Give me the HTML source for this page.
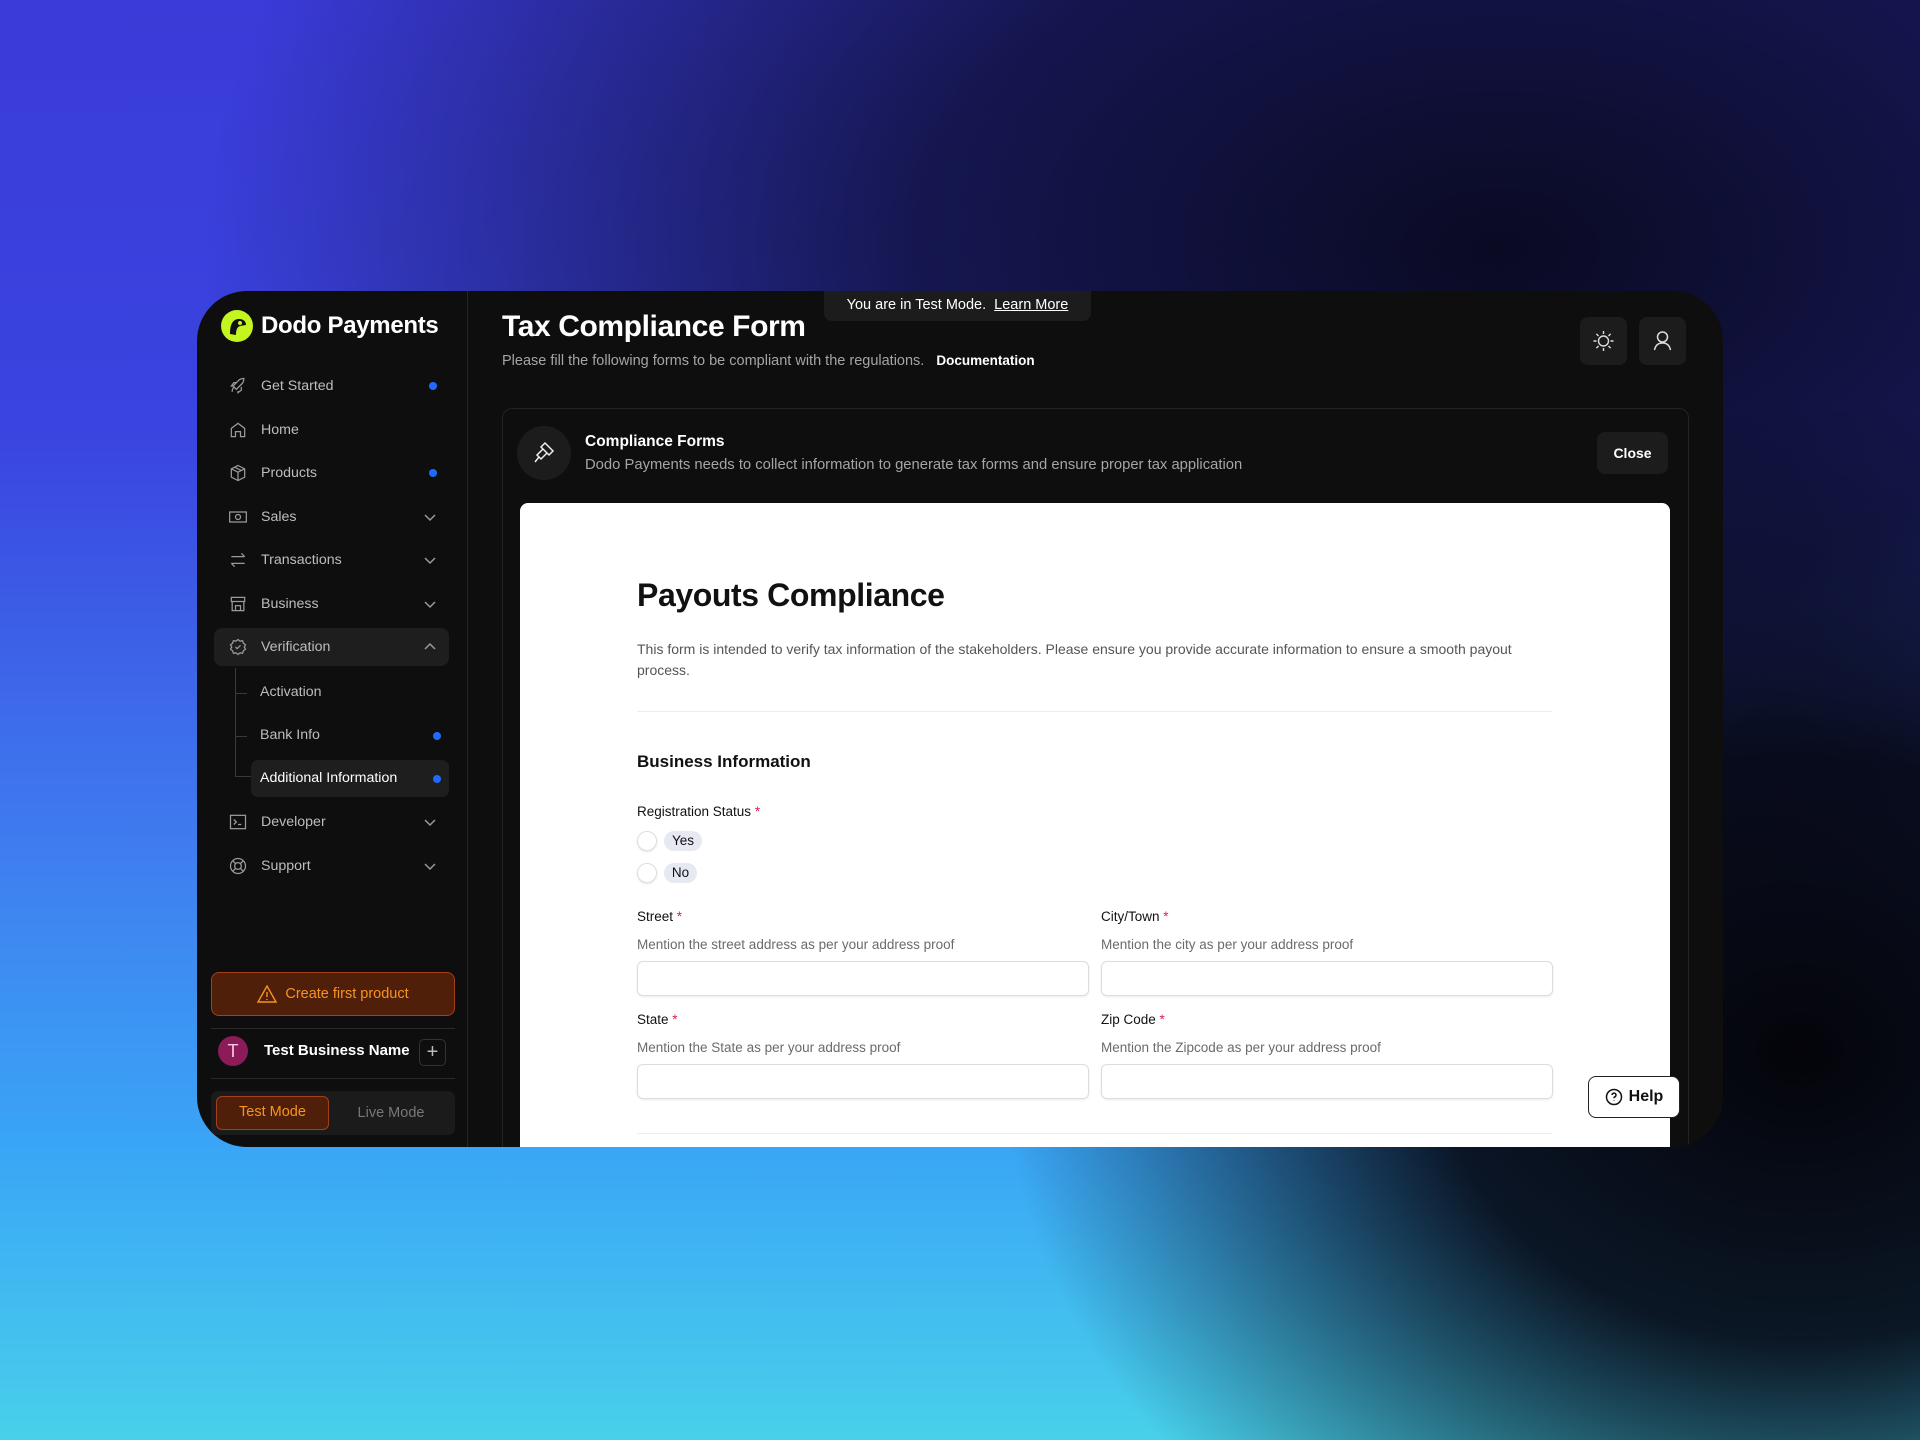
<!DOCTYPE html>
<html><head><meta charset="utf-8"><style>
*{box-sizing:border-box;margin:0;padding:0}
html,body{width:1920px;height:1440px;overflow:hidden}
body{font-family:"Liberation Sans",sans-serif;position:relative;
background:
radial-gradient(ellipse 800px 650px at 1800px 1050px,rgba(4,4,10,1) 0%,rgba(5,5,15,0.9) 45%,rgba(5,5,15,0) 100%),
radial-gradient(ellipse 1300px 800px at 1500px 250px,rgba(10,10,35,1) 0%,rgba(12,12,45,0.8) 45%,rgba(10,10,40,0) 100%),
linear-gradient(180deg,#3a3bd8 0%,#3a44e0 30%,#3f7ff0 60%,#3aa6f6 80%,#48d0ea 100%);}
.win{position:absolute;left:197px;top:291px;width:1526px;height:856px;background:#0e0e0e;border-radius:50px;overflow:hidden}
.side{position:absolute;left:0;top:0;width:271px;height:100%;border-right:1px solid #262626}
.logo{position:absolute;left:24px;top:19px;display:flex;align-items:center;color:#fff;font-size:24px;font-weight:bold;letter-spacing:-0.3px}
.logo .c{width:32px;height:32px;border-radius:50%;background:#c4f520;margin-right:8px;position:relative}
.nav{position:absolute;left:0;width:271px;height:38px;display:flex;align-items:center;color:#bdbdbd;font-size:14.2px}
.nav svg{position:absolute;left:31px;width:20px;height:20px;stroke:#9a9a9a;fill:none;stroke-width:1.5}
.nav span{position:absolute;left:64px}
.dot{position:absolute;left:232px;width:8px;height:8px;border-radius:50%;background:#1f6bff}
.nav .chev{position:absolute;left:226px;width:14px;height:14px}
.sub{position:absolute;left:63px;font-size:14.2px;color:#bdbdbd}
.main{position:absolute;left:272px;top:0;right:0;bottom:0}
.lbl{font-size:13.5px;color:#111}
.req{color:#e11d48}
.desc{font-size:13.5px;color:#6b6b6b}
.inp{position:absolute;height:35px;border:1px solid #dcdcdc;border-radius:6px;box-shadow:0 1px 2px rgba(0,0,0,0.08)}
</style></head><body>
<div class="win">
<div class="side">
 <div class="logo"><div class="c"><svg width="32" height="32" viewBox="0 0 32 32"><path d="M9 24 C9 14 12 9 18 9 C23 9 25 12 25 15 L19 16 C16 17 15 20 15 25 Z" fill="#111"/><circle cx="19" cy="13" r="2" fill="#c4f520"/></svg></div>Dodo Payments</div>
 <div class="nav" style="top:76px"><svg viewBox="0 0 24 24"><path d="M5 19c0-3 1-5 3-6M9 15l-3-3 7-7c2-2 5-2 6-2 0 1 0 4-2 6l-7 7zM6 12l-2 0 3-4h4M12 18v2l4-3v-4"/></svg><span>Get Started</span><div class="dot"></div></div>
 <div class="nav" style="top:120px"><svg viewBox="0 0 24 24"><path d="M4 10l8-6 8 6v10h-5v-6H9v6H4z"/></svg><span>Home</span></div>
 <div class="nav" style="top:163px"><svg viewBox="0 0 24 24"><path d="M12 3l8 4v10l-8 4-8-4V7zM4 7l8 4 8-4M12 11v10M8 5l8 4"/></svg><span>Products</span><div class="dot"></div></div>
 <div class="nav" style="top:207px"><svg viewBox="0 0 24 24"><rect x="2" y="6" width="20" height="12"/><circle cx="12" cy="12" r="3"/></svg><span>Sales</span><svg class="chev" viewBox="0 0 14 14"><path d="M2 5l5 5 5-5"/></svg></div>
 <div class="nav" style="top:250px"><svg viewBox="0 0 24 24"><path d="M4 8h16M16 4l4 4M20 16H4M8 20l-4-4"/></svg><span>Transactions</span><svg class="chev" viewBox="0 0 14 14"><path d="M2 5l5 5 5-5"/></svg></div>
 <div class="nav" style="top:294px"><svg viewBox="0 0 24 24"><path d="M4 4h16v5H4zM5 9v11h14V9M9 20v-6h6v6"/></svg><span>Business</span><svg class="chev" viewBox="0 0 14 14"><path d="M2 5l5 5 5-5"/></svg></div>
 <div style="position:absolute;left:17px;top:337px;width:235px;height:38px;background:#1e1e1e;border-radius:8px"></div>
 <div class="nav" style="top:337px"><svg viewBox="0 0 24 24"><path d="M12 3l2.5 2 3-.5 1 3 2.5 2-1.5 2.5 1.5 2.5-2.5 2-1 3-3-.5L12 21l-2.5-2-3 .5-1-3L3 14.5 4.5 12 3 9.5l2.5-2 1-3 3 .5z"/><path d="M9 12l2 2 4-4"/></svg><span>Verification</span><svg class="chev" viewBox="0 0 14 14"><path d="M2 9l5-5 5 5"/></svg></div>
 <div style="position:absolute;left:38px;top:377px;width:1px;height:108px;background:#3a3a3a"></div>
 <div style="position:absolute;left:38px;top:402px;width:12px;height:1px;background:#3a3a3a"></div>
 <div style="position:absolute;left:38px;top:445px;width:12px;height:1px;background:#3a3a3a"></div>
 <div style="position:absolute;left:38px;top:485px;width:16px;height:1px;background:#3a3a3a"></div>
 <div class="sub" style="top:393px">Activation</div>
 <div class="sub" style="top:436px">Bank Info</div><div class="dot" style="top:441px;left:236px"></div>
 <div style="position:absolute;left:54px;top:469px;width:198px;height:37px;background:#1e1e1e;border-radius:7px"></div>
 <div class="sub" style="top:479px;color:#fff">Additional Information</div><div class="dot" style="top:484px;left:236px"></div>
 <div class="nav" style="top:512px"><svg viewBox="0 0 24 24"><rect x="3" y="4" width="18" height="16"/><path d="M7 9l3 3-3 3M12 15h4"/></svg><span>Developer</span><svg class="chev" viewBox="0 0 14 14"><path d="M2 5l5 5 5-5"/></svg></div>
 <div class="nav" style="top:556px"><svg viewBox="0 0 24 24"><circle cx="12" cy="12" r="9"/><circle cx="12" cy="12" r="4"/><path d="M6 6l3 3M18 6l-3 3M6 18l3-3M18 18l-3-3"/></svg><span>Support</span><svg class="chev" viewBox="0 0 14 14"><path d="M2 5l5 5 5-5"/></svg></div>
 <div style="position:absolute;left:14px;top:681px;width:244px;height:44px;background:#4f1f0a;border:1.5px solid #a3401b;border-radius:8px;color:#f7941d;font-size:14.5px;display:flex;align-items:center;justify-content:center;gap:8px"><svg width="20" height="18" viewBox="0 0 20 18" fill="none" stroke="#f7941d" stroke-width="1.4"><path d="M10 1L19 17H1z"/><path d="M10 7v5M10 14v1"/></svg>Create first product</div>
 <div style="position:absolute;left:14px;top:737px;width:244px;height:1px;background:#2a2a2a"></div>
 <div style="position:absolute;left:21px;top:745px;width:30px;height:30px;border-radius:50%;background:#8c1b5a;color:#f8c8e0;font-size:18px;text-align:center;line-height:30px">T</div>
 <div style="position:absolute;left:67px;top:751px;color:#fff;font-size:15px;font-weight:bold">Test Business Name</div>
 <div style="position:absolute;left:222px;top:748px;width:27px;height:27px;border:1px solid #333;border-radius:5px;color:#bbb;text-align:center;line-height:24px;font-size:20px">+</div>
 <div style="position:absolute;left:14px;top:787px;width:244px;height:1px;background:#2a2a2a"></div>
 <div style="position:absolute;left:14px;top:800px;width:244px;height:44px;background:#1b1b1b;border-radius:7px"></div>
 <div style="position:absolute;left:19px;top:805px;width:113px;height:34px;background:#4f1f0a;border:1.5px solid #a3401b;border-radius:6px;color:#f7941d;font-size:14.5px;text-align:center;line-height:31px">Test Mode</div>
 <div style="position:absolute;left:134px;top:805px;width:120px;height:34px;color:#777;font-size:14.5px;text-align:center;line-height:34px">Live Mode</div>
</div>
<div class="main">
 <div style="position:absolute;left:355px;top:0;width:267px;height:30px;background:#1c1c1c;border-radius:0 0 8px 8px;color:#fff;font-size:14.5px;text-align:center;line-height:28px">You are in Test Mode.&nbsp; <span style="text-decoration:underline">Learn More</span></div>
 <div style="position:absolute;left:33px;top:19px;color:#fff;font-size:30px;font-weight:bold;letter-spacing:-0.4px">Tax Compliance Form</div>
 <div style="position:absolute;left:33px;top:62px;color:#a5a5a5;font-size:14.5px">Please fill the following forms to be compliant with the regulations. &nbsp;&nbsp;<b style="color:#fff;font-size:13.5px">Documentation</b></div>
 <div style="position:absolute;left:1111px;top:26px;width:47px;height:48px;background:#1c1c1c;border-radius:8px"><svg width="47" height="48" viewBox="0 0 47 48" fill="none" stroke="#ddd" stroke-width="1.4"><circle cx="23.5" cy="24" r="5"/><path d="M23.5 14v3M23.5 31v3M13.5 24h3M30.5 24h3M16.4 16.9l2.1 2.1M28.5 29l2.1 2.1M16.4 31.1l2.1-2.1M28.5 19l2.1-2.1"/></svg></div>
 <div style="position:absolute;left:1170px;top:26px;width:47px;height:48px;background:#1c1c1c;border-radius:8px"><svg width="47" height="48" viewBox="0 0 47 48" fill="none" stroke="#ddd" stroke-width="1.5"><circle cx="23.5" cy="20" r="5"/><path d="M15.5 33c1-5 4-7 8-7s7 2 8 7"/></svg></div>
 <div style="position:absolute;left:33px;top:117px;width:1187px;height:760px;border:1px solid #232323;border-radius:10px;background:#0e0e0e"></div>
 <div style="position:absolute;left:48px;top:135px;width:54px;height:54px;border-radius:50%;background:#1c1c1c"><svg width="54" height="54" viewBox="0 0 54 54" fill="none" stroke="#eee" stroke-width="1.5"><path d="M28 17l8 8-4 4-8-8zM26 23l-6 6 4 4 6-6M22 31l-4 5"/></svg></div>
 <div style="position:absolute;left:116px;top:142px;color:#fff;font-size:15.5px;font-weight:bold">Compliance Forms</div>
 <div style="position:absolute;left:116px;top:166px;color:#a5a5a5;font-size:14.8px">Dodo Payments needs to collect information to generate tax forms and ensure proper tax application</div>
 <div style="position:absolute;left:1128px;top:141px;width:71px;height:42px;background:#1c1c1c;border-radius:8px;color:#fff;font-size:14px;font-weight:bold;text-align:center;line-height:42px">Close</div>
 <div style="position:absolute;left:51px;top:212px;width:1150px;height:700px;background:#fff;border-radius:8px 8px 0 0">
  <div style="position:absolute;left:117px;top:74px;font-size:32px;font-weight:bold;color:#111;letter-spacing:-0.4px">Payouts Compliance</div>
  <div style="position:absolute;left:117px;top:136px;width:918px;font-size:14px;line-height:21px;color:#555">This form is intended to verify tax information of the stakeholders. Please ensure you provide accurate information to ensure a smooth payout process.</div>
  <div style="position:absolute;left:117px;top:208px;width:915px;height:1px;background:#ececec"></div>
  <div style="position:absolute;left:117px;top:249px;font-size:17px;font-weight:bold;color:#111">Business Information</div>
  <div class="lbl" style="position:absolute;left:117px;top:301px">Registration Status <span class="req">*</span></div>
  <div style="position:absolute;left:117px;top:328px;width:20px;height:20px;border-radius:50%;border:1px solid #ddd;box-shadow:0 1px 2px rgba(0,0,0,.1)"></div>
  <div style="position:absolute;left:144px;top:328px;width:38px;height:20px;border-radius:10px;background:#e6e9f2;font-size:13.5px;color:#111;text-align:center;line-height:20px">Yes</div>
  <div style="position:absolute;left:117px;top:360px;width:20px;height:20px;border-radius:50%;border:1px solid #ddd;box-shadow:0 1px 2px rgba(0,0,0,.1)"></div>
  <div style="position:absolute;left:144px;top:360px;width:33px;height:20px;border-radius:10px;background:#e6e9f2;font-size:13.5px;color:#111;text-align:center;line-height:20px">No</div>
  <div class="lbl" style="position:absolute;left:117px;top:406px">Street <span class="req">*</span></div>
  <div class="desc" style="position:absolute;left:117px;top:434px">Mention the street address as per your address proof</div>
  <div class="inp" style="left:117px;top:458px;width:452px"></div>
  <div class="lbl" style="position:absolute;left:581px;top:406px">City/Town <span class="req">*</span></div>
  <div class="desc" style="position:absolute;left:581px;top:434px">Mention the city as per your address proof</div>
  <div class="inp" style="left:581px;top:458px;width:452px"></div>
  <div class="lbl" style="position:absolute;left:117px;top:509px">State <span class="req">*</span></div>
  <div class="desc" style="position:absolute;left:117px;top:537px">Mention the State as per your address proof</div>
  <div class="inp" style="left:117px;top:561px;width:452px"></div>
  <div class="lbl" style="position:absolute;left:581px;top:509px">Zip Code <span class="req">*</span></div>
  <div class="desc" style="position:absolute;left:581px;top:537px">Mention the Zipcode as per your address proof</div>
  <div class="inp" style="left:581px;top:561px;width:452px"></div>
  <div style="position:absolute;left:117px;top:630px;width:915px;height:1px;background:#ececec"></div>
 </div>
 <div style="position:absolute;left:1119px;top:785px;width:92px;height:42px;background:#fff;border:1.5px solid #222;border-radius:8px;font-size:16px;font-weight:bold;color:#111;display:flex;align-items:center;justify-content:center;gap:6px"><svg width="18" height="18" viewBox="0 0 18 18" fill="none" stroke="#111" stroke-width="1.5"><circle cx="9" cy="9" r="7.5"/><path d="M7 7a2 2 0 1 1 2.5 2c-.5.2-.5.6-.5 1.2M9 12.5v.5"/></svg>Help</div>
</div>
</div>
</body></html>
